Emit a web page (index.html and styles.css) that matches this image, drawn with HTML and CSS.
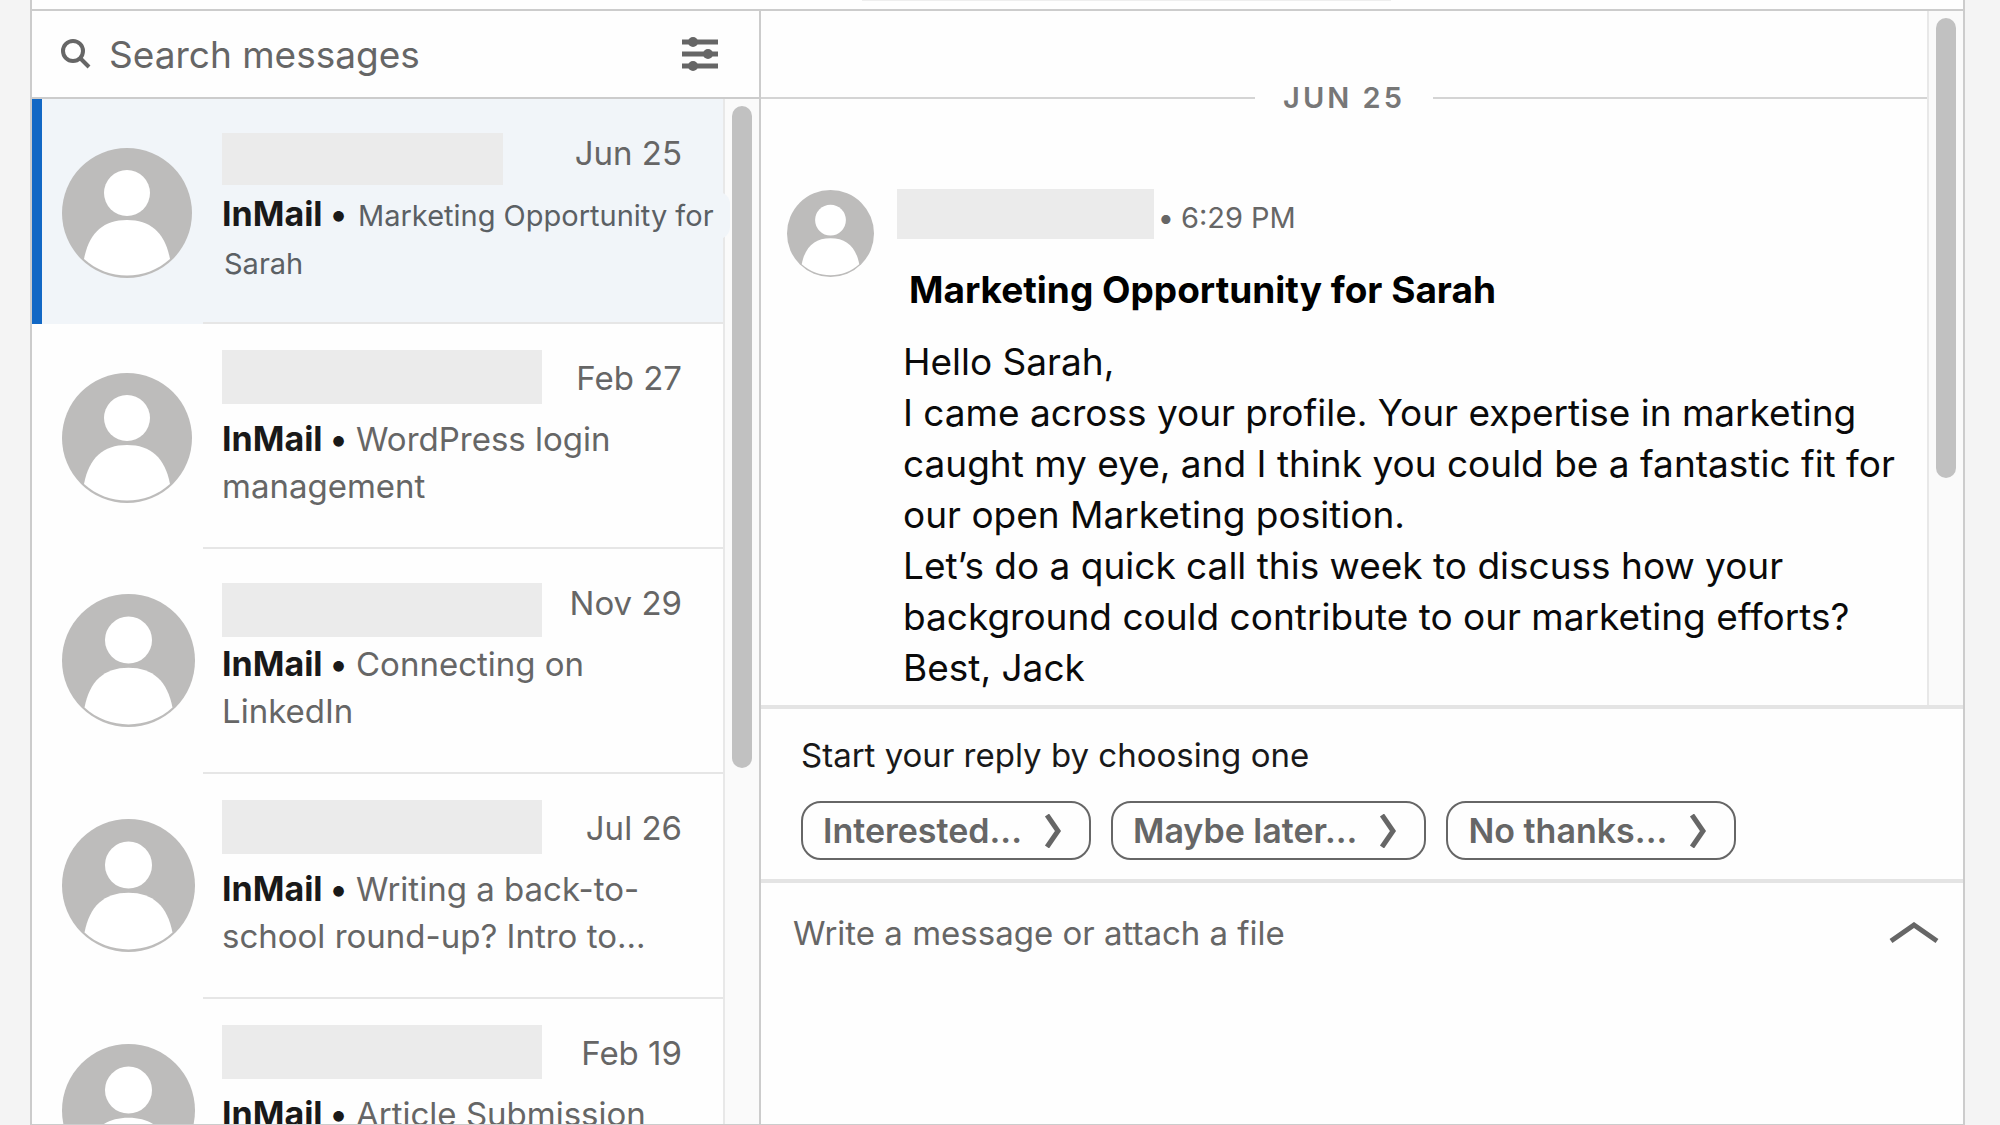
FILE: index.html
```html
<!DOCTYPE html>
<html lang="en">
<head>
  <meta charset="UTF-8" />
  <meta name="viewport" content="width=device-width, initial-scale=1.0" />
  <title>Messaging</title>
  <link rel="stylesheet" href="styles.css">
</head>
<body>
  <!-- Shared avatar drawing -->
  <svg class="sprite" aria-hidden="true">
    <symbol id="person" viewBox="0 0 130 130">
      <circle cx="65" cy="65" r="65" fill="#bdbcbb" />
      <circle cx="65" cy="45" r="23" fill="#fff" />
      <path d="M22 111 C27 85 41 72 65 72 C89 72 103 85 108 111 C84 133 46 133 22 111 Z" fill="#fff" />
    </symbol>
  </svg>

  <div class="app">
    <header class="topbar"><div class="topbar-field"></div></header>

    <main class="panels">
      <section class="inbox">
        <form class="search">
          <svg class="search-icon" viewBox="0 0 30 30" aria-hidden="true">
            <circle cx="12" cy="12" r="10" />
            <path d="M18 18 L28 28" />
          </svg>
          <input type="search" class="search-input" placeholder="Search messages" aria-label="Search messages" />
          <button type="button" class="filter-btn" aria-label="Filter messages">
            <svg viewBox="0 0 36 36">
              <path d="M0 6 H36 M0 18 H36 M0 30 H36" stroke="#666" stroke-width="5" />
              <circle cx="11" cy="6" r="5" />
              <circle cx="26" cy="18" r="5" />
              <circle cx="11" cy="30" r="5" />
            </svg>
          </button>
        </form>

        <div class="inbox-body">
          <ul class="threads">
            <li>
              <a class="thread active" href="#">
                <svg class="avatar"><use href="#person" /></svg>
                <div class="thread-info">
                  <div class="thread-head">
                    <span class="name low short"></span>
                    <time>Jun 25</time>
                  </div>
                  <p class="preview wide"><b>InMail •</b> <span class="subject">Marketing Opportunity for Sarah</span></p>
                </div>
              </a>
            </li>
            <li>
              <a class="thread" href="#">
                <svg class="avatar"><use href="#person" /></svg>
                <div class="thread-info">
                  <div class="thread-head">
                    <span class="name"></span>
                    <time>Feb 27</time>
                  </div>
                  <p class="preview"><b>InMail •</b> WordPress login management</p>
                </div>
              </a>
            </li>
            <li>
              <a class="thread" href="#">
                <svg class="avatar large"><use href="#person" /></svg>
                <div class="thread-info">
                  <div class="thread-head">
                    <span class="name low"></span>
                    <time>Nov 29</time>
                  </div>
                  <p class="preview"><b>InMail •</b> Connecting on LinkedIn</p>
                </div>
              </a>
            </li>
            <li>
              <a class="thread" href="#">
                <svg class="avatar large"><use href="#person" /></svg>
                <div class="thread-info">
                  <div class="thread-head">
                    <span class="name"></span>
                    <time>Jul 26</time>
                  </div>
                  <p class="preview"><b>InMail •</b> Writing a back-to-school round-up? Intro to...</p>
                </div>
              </a>
            </li>
            <li>
              <a class="thread" href="#">
                <svg class="avatar large"><use href="#person" /></svg>
                <div class="thread-info">
                  <div class="thread-head">
                    <span class="name"></span>
                    <time>Feb 19</time>
                  </div>
                  <p class="preview"><b>InMail •</b> Article Submission</p>
                </div>
              </a>
            </li>
          </ul>
          <div class="track"><div class="thumb inbox-thumb"></div></div>
        </div>
      </section>

      <section class="chat">
        <div class="chat-body">
          <div class="messages">
            <div class="day"><span>JUN 25</span></div>
            <article class="message">
              <svg class="avatar small"><use href="#person" /></svg>
              <div class="message-info">
                <div class="message-head">
                  <span class="sender"></span>
                  <time><b>•</b> 6:29 PM</time>
                </div>
                <h2>Marketing Opportunity for Sarah</h2>
                <div class="message-text">
                  <p>Hello Sarah,</p>
                  <p>I came across your profile. Your expertise in marketing caught my eye, and I think you could be a fantastic fit for our open Marketing position.</p>
                  <p>Let’s do a quick call this week to discuss how your background could contribute to our marketing efforts?</p>
                  <p>Best, Jack</p>
                </div>
              </div>
            </article>
          </div>
          <div class="track"><div class="thumb chat-thumb"></div></div>
        </div>

        <div class="replies">
          <p>Start your reply by choosing one</p>
          <div class="reply-buttons">
            <button type="button">Interested... <svg viewBox="0 0 18 34"><path d="M3 1 L14 17 L3 33" /></svg></button>
            <button type="button">Maybe later... <svg viewBox="0 0 18 34"><path d="M3 1 L14 17 L3 33" /></svg></button>
            <button type="button">No thanks... <svg viewBox="0 0 18 34"><path d="M3 1 L14 17 L3 33" /></svg></button>
          </div>
        </div>

        <form class="compose">
          <textarea placeholder="Write a message or attach a file" aria-label="Write a message or attach a file"></textarea>
          <button type="button" class="expand-btn" aria-label="Expand">
            <svg viewBox="0 0 50 22"><path d="M2 19 L25 3 L48 19" /></svg>
          </button>
        </form>
      </section>
    </main>
  </div>
</body>
</html>
```

FILE: styles.css
```css
* {
  box-sizing: border-box;
}

body {
  margin: 0;
  background: #f4f4f4;
  color: #666;
  font-family: Inter, "Liberation Sans", sans-serif;
  font-size: 33px;
}

p, h2, ul {
  margin: 0;
  padding: 0;
}

button, input, textarea {
  font: inherit;
  color: inherit;
  background: none;
  border: none;
  padding: 0;
  outline: none;
}

button {
  cursor: pointer;
}

svg {
  display: block;
  flex-shrink: 0;
}

.sprite {
  display: none;
}

/* Window */
.app {
  display: flex;
  flex-direction: column;
  height: 100vh;
  margin: 0 35px 0 30px;
  background: #fefefe;
  border: 2px solid #ccc;
  border-width: 0 2px 1px;
  overflow: hidden;
}

.topbar {
  flex: none;
  height: 11px;
  padding-left: 43%;
  border-bottom: 2px solid #ccc;
}

.topbar-field {
  width: 48%;
  height: 1px;
  background: #eee;
}

.panels {
  flex: 1;
  min-height: 0;
  display: grid;
  grid-template-columns: 729fr 1202fr;
  grid-template-rows: minmax(0, 1fr);
}

/* Left panel */
.inbox {
  display: flex;
  flex-direction: column;
  min-width: 0;
  border-right: 2px solid #ccc;
}

.search {
  flex: none;
  display: flex;
  align-items: center;
  height: 88px;
  padding: 0 41px 0 29px;
  border-bottom: 2px solid #ccc;
}

.search-icon {
  width: 30px;
  height: 30px;
  fill: none;
  stroke: #666;
  stroke-width: 4;
}

.search-input {
  flex: 1;
  min-width: 0;
  margin-left: 18px;
  font-size: 37px;
}

::placeholder {
  color: #666;
  opacity: 1;
}

.filter-btn svg {
  width: 36px;
  height: 36px;
  fill: #666;
}

.inbox-body {
  flex: 1;
  min-height: 0;
  display: flex;
}

.threads {
  flex: 1;
  min-width: 0;
  list-style: none;
}

.thread {
  display: flex;
  height: 225px;
  padding-left: 30px;
  color: inherit;
  text-decoration: none;
}

.thread.active {
  background: #f1f5f9;
  box-shadow: inset 10px 0 #1268c5;
}

.avatar {
  width: 130px;
  height: 130px;
  margin: 49px 11px 0 0;
}

.avatar.large {
  width: 133px;
  height: 133px;
  margin: 45px 8px 0 0;
}

.thread-info {
  flex: 1;
  min-width: 0;
  padding: 0 41px 0 19px;
  border-bottom: 2px solid #e6e6e6;
}

.thread-head {
  display: flex;
  justify-content: space-between;
  height: 91px;
}

.name {
  width: 320px;
  height: 54px;
  margin-top: 26px;
  background: #ebebeb;
}

.name.low {
  margin-top: 34px;
}

.name.short {
  width: 281px;
  height: 52px;
}

.thread-head time {
  margin-top: 34px;
  line-height: 40px;
}

.preview {
  line-height: 47px;
}

.preview.wide {
  margin-right: -54px;
}

.preview b {
  color: #191919;
  font-size: 34px;
  font-weight: 700;
}

/* The subject runs over the edge of the scrollbar track */
.subject {
  position: relative;
  padding: 6px 16px 6px 2px;
  border-radius: 12px;
  background: #f1f5f9;
  box-decoration-break: clone;
  -webkit-box-decoration-break: clone;
  color: #5b6064;
  font-size: 29px;
}

/* Scrollbars */
.track {
  flex: none;
  width: 36px;
  padding-top: 7px;
  background: #fafafa;
  border-left: 2px solid #e8e8e8;
}

.thumb {
  width: 20px;
  margin: 0 auto;
  border-radius: 10px;
  background: #c1c1c1;
}

.inbox-thumb {
  height: 65%;
}

.chat-thumb {
  height: 67%;
}

/* Right panel */
.chat {
  display: flex;
  flex-direction: column;
  min-width: 0;
}

.chat-body {
  flex: none;
  display: flex;
}

.messages {
  flex: 1;
  min-width: 0;
  padding: 67px 0 12px;
}

.day {
  display: flex;
  align-items: center;
  gap: 28px;
  font-size: 29px;
  font-weight: 600;
  line-height: 40px;
  letter-spacing: 3px;
  color: #777;
}

.day::before,
.day::after {
  content: "";
  flex: 1;
  height: 2px;
  background: #d4d4d4;
}

.message {
  display: flex;
  padding: 71px 25px 0 26px;
}

.avatar.small {
  width: 87px;
  height: 87px;
  margin: 1px 23px 0 0;
}

.message-head {
  display: flex;
  align-items: center;
  gap: 5px;
  height: 50px;
}

.sender {
  width: 257px;
  height: 50px;
  background: #ebebeb;
}

.message-head time {
  font-size: 29px;
  line-height: 40px;
  padding-top: 8px;
}

.message h2 {
  margin: 28px 0 0 12px;
  font-size: 37px;
  font-weight: 700;
  line-height: 46px;
  color: #000;
}

.message-text {
  margin: 23px 0 0 6px;
  font-size: 37px;
  line-height: 51px;
  color: #0a0a0a;
}

.replies {
  flex: none;
  padding: 24px 39px 19px 40px;
  border: 4px solid #e4e4e4;
  border-width: 4px 0;
}

.replies p {
  line-height: 44px;
  color: #191919;
}

.reply-buttons {
  display: flex;
  gap: 20px;
  margin-top: 24px;
}

.reply-buttons button {
  display: flex;
  align-items: center;
  gap: 22px;
  height: 59px;
  padding: 0 27px 0 20px;
  border: 2px solid #666;
  border-radius: 20px;
  font-size: 34px;
  font-weight: 600;
}

.reply-buttons svg {
  width: 18px;
  height: 34px;
}

.reply-buttons path,
.expand-btn path {
  fill: none;
  stroke: #666;
  stroke-width: 5;
}

.compose {
  flex: 1;
  display: flex;
  align-items: flex-start;
  padding: 27px 24px 0 32px;
}

.compose textarea {
  flex: 1;
  align-self: stretch;
  line-height: 46px;
  resize: none;
}

.expand-btn svg {
  width: 50px;
  height: 22px;
  margin-top: 12px;
}
```
